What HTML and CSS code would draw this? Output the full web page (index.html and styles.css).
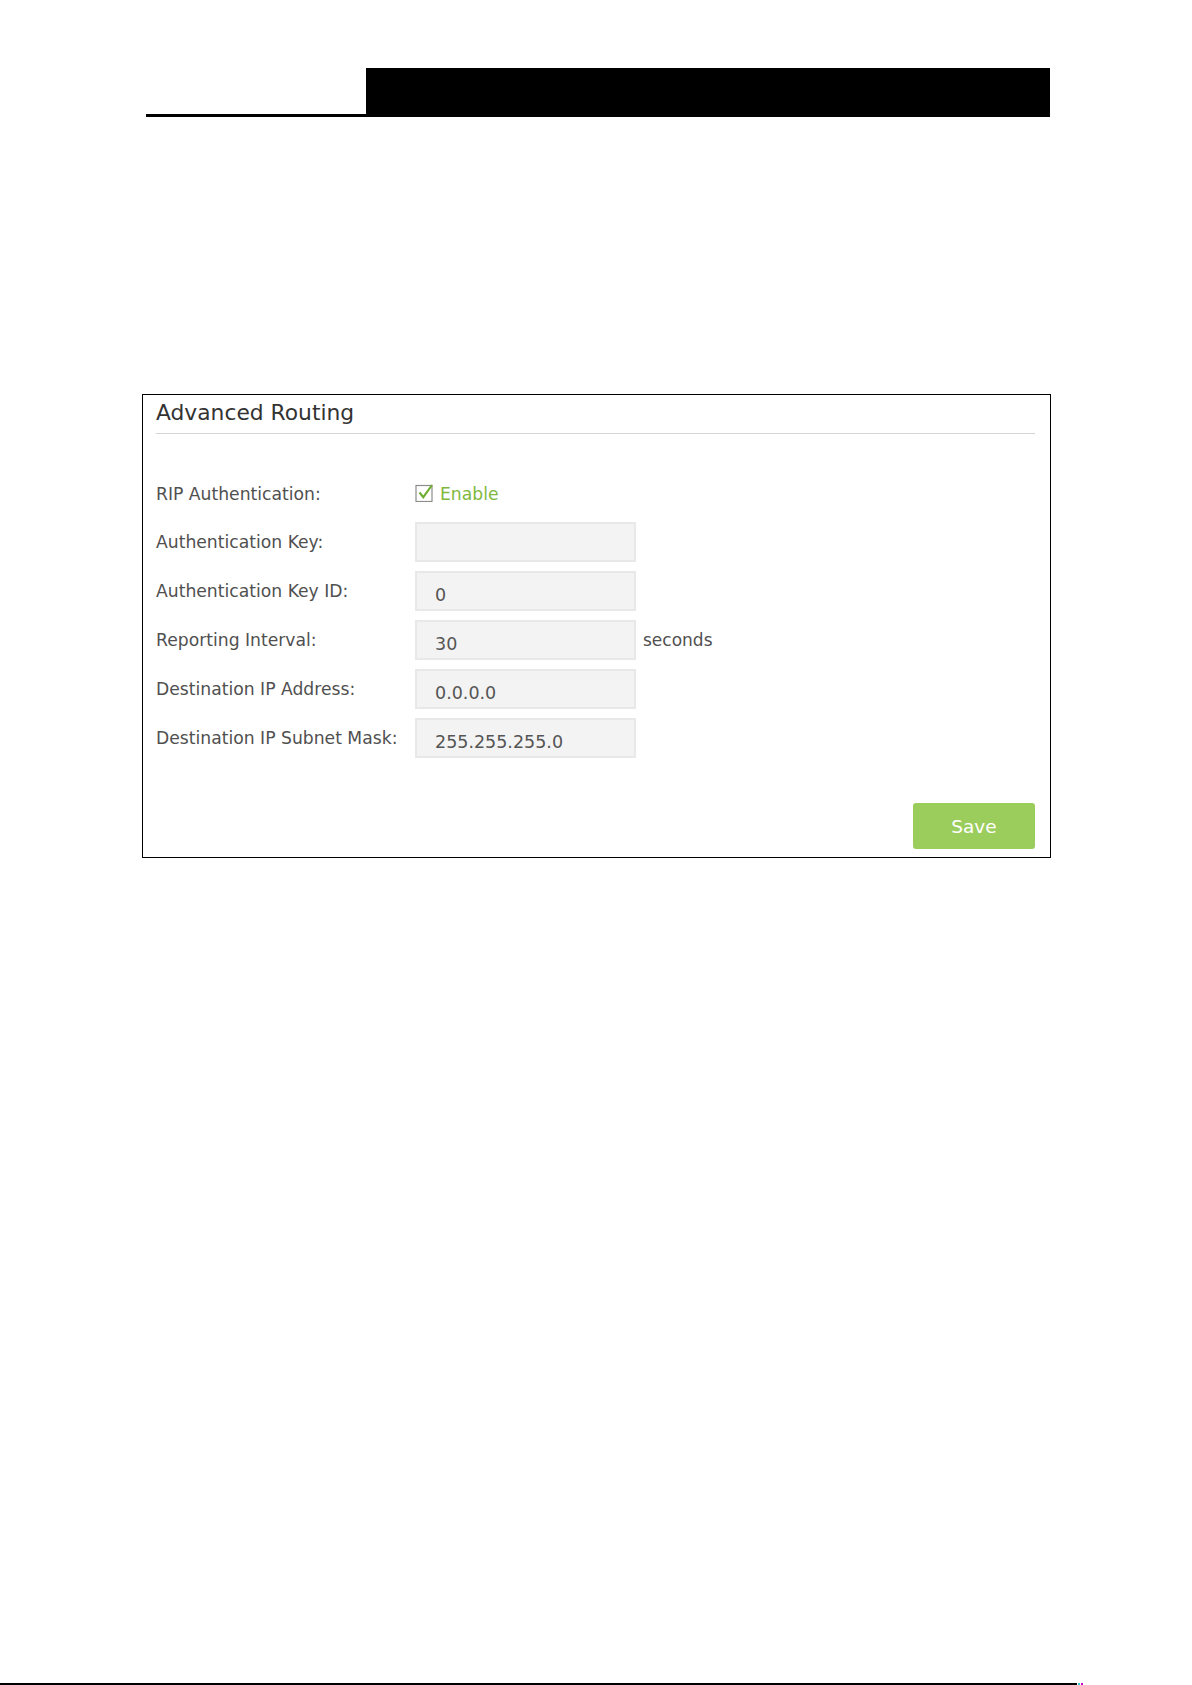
FILE: index.html
```html
<!DOCTYPE html>
<html lang="en">
<head>
    <meta charset="UTF-8">
    <meta name="viewport" content="width=device-width, initial-scale=1">
    <title>Advanced Routing</title>
    <link rel="stylesheet" href="styles.css">
</head>
<body>
<div class="page">
    <div class="header">
        <div class="header-rule"></div>
        <div class="header-bar"></div>
    </div>

    <div class="panel">
        <h2 class="panel-title">Advanced Routing</h2>
        <form class="rip-form" onsubmit="return false">
            <div class="row">
                <label class="field-label">RIP Authentication:</label>
                <label class="check">
                    <svg width="19" height="19" viewBox="0 0 19 19">
                        <rect x="1" y="2.5" width="16" height="16" fill="#fff" stroke="#8c8c8c" stroke-width="1.2"/>
                        <path d="M4.5 9.5 L8.3 14.2 L17 2" fill="none" stroke="#6fae31" stroke-width="2.1"/>
                    </svg>
                    <span>Enable</span>
                </label>
            </div>
            <div class="row">
                <label class="field-label">Authentication Key:</label>
                <input class="field" type="text" value="">
            </div>
            <div class="row">
                <label class="field-label">Authentication Key ID:</label>
                <input class="field" type="text" value="0">
            </div>
            <div class="row">
                <label class="field-label">Reporting Interval:</label>
                <input class="field" type="text" value="30">
                <span class="unit">seconds</span>
            </div>
            <div class="row">
                <label class="field-label">Destination IP Address:</label>
                <input class="field" type="text" value="0.0.0.0">
            </div>
            <div class="row">
                <label class="field-label">Destination IP Subnet Mask:</label>
                <input class="field" type="text" value="255.255.255.0">
            </div>
            <div class="actions">
                <button class="save-btn" type="submit">Save</button>
            </div>
        </form>
    </div>

    <div class="footer">
        <div class="footer-rule"></div>
        <span class="dot dot-a"></span>
        <span class="dot dot-b"></span>
    </div>
</div>
</body>
</html>
```

FILE: styles.css
```css
body { margin: 0; background: #fff; font-family: "DejaVu Sans", Verdana, sans-serif; }
.page { height: 1685px; display: flex; flex-direction: column; }

.header { display: flex; align-items: flex-end; margin: 68px 0 0 146px; }
.header-rule { width: 220px; height: 3px; background: #000; }
.header-bar { width: 684px; height: 49px; background: #000; }

.panel { box-sizing: border-box; width: 909px; margin: 277px 0 0 142px; border: 1px solid #000; padding: 0 15px 8px 13px; }
.panel-title { margin: 0; padding: 4px 0 6px; font-size: 21.8px; font-weight: normal; line-height: 28px; color: #333; border-bottom: 1px solid #d4d4d4; }

.rip-form { margin-top: 39.5px; display: flex; flex-direction: column; gap: 8.9px; }
.row { display: flex; align-items: center; height: 40px; }
.field-label { width: 259px; font-size: 17.2px; color: #505050; }
.check { display: flex; align-items: center; gap: 6px; font-size: 17.2px; color: #80b83e; }
.check svg { display: block; margin-top: -2px; }
.field { box-sizing: border-box; width: 221px; height: 40px; margin: 0; padding: 8px 0 0 18px; border: 2px solid #e8e8e8; background: #f3f3f3; font-family: "DejaVu Sans", Verdana, sans-serif; font-size: 17.5px; color: #555; outline: none; }
.unit { margin-left: 7px; font-size: 17px; color: #505050; }

.actions { display: flex; justify-content: flex-end; margin-top: 36px; }
.save-btn { width: 122px; height: 46px; border: 0; border-radius: 3px; background: #9bcd5d; color: #fff; font-family: "DejaVu Sans", Verdana, sans-serif; font-size: 18.5px; padding: 2px 0 0; }

.footer { margin-top: auto; display: flex; align-items: flex-end; height: 2px; }
.footer-rule { width: 1077px; height: 2px; background: #000; }
.dot { width: 2px; height: 2px; }
.dot-a { background: #3cc; margin-left: 1px; }
.dot-b { background: #c0c; margin-left: 1px; }
```
